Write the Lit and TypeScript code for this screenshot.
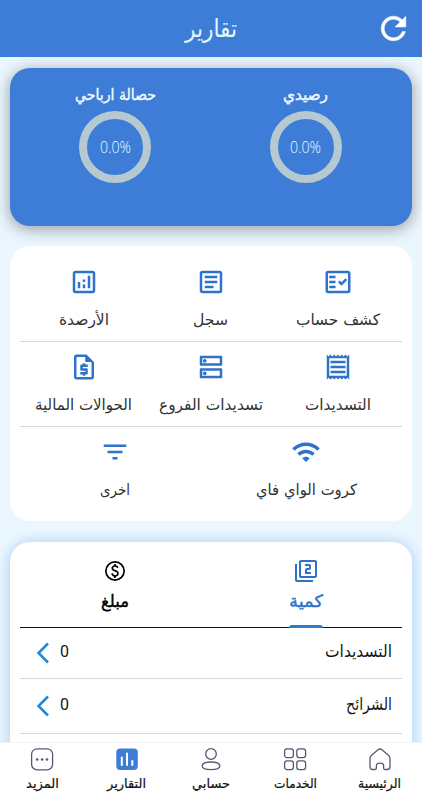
import { LitElement, html, css, svg } from "lit";
import { customElement } from "lit/decorators.js";

// A text run fitted to a given width; the baseline sits 20px under the box top.
const fit = (text: string, w: number, size: number, cls = "") => html`
  <svg class="fit ${cls}" width=${w} height="26">
    <text x=${w / 2} y="20" text-anchor="middle" font-size=${size} textLength=${w} lengthAdjust="spacingAndGlyphs">${text}</text>
  </svg>`;

const icon = (d: string, size: number) => html`
  <svg class="icon" width=${size} height=${size} viewBox="0 0 24 24"><path fill="currentColor" fill-rule="evenodd" d=${d}></path></svg>`;

const BOX = "M19 3H5c-1.1 0-2 .9-2 2v14c0 1.100.9 2 2 2h14c1.100 0 2-.9 2-2V5c0-1.100-.9-2-2-2zM19 19H5V5h14z";
const I = {
  refresh: "M17.65 6.35C16.2 4.9 14.21 4 12 4c-4.42 0-7.99 3.58-7.99 8s3.57 8 7.99 8c3.73 0 6.84-2.55 7.73-6h-2.08c-.82 2.33-3.04 4-5.65 4-3.31 0-6-2.69-6-6s2.69-6 6-6c1.66 0 3.14.69 4.22 1.78L13 11h7V4l-2.35 2.35z",
  factCheck: "M20 3H4c-1.100 0-2 .9-2 2v14c0 1.100.9 2 2 2h16c1.100 0 2-.9 2-2V5c0-1.100-.9-2-2-2zM20 19H4V5h16zM5 7h5v2H5zM5 11h5v2H5zM5 15h5v2H5zM19.41 10.42 17.99 9l-3.17 3.17-1.41-1.42L12 12.16 14.820 15z",
  article: BOX + "M7 7h10v2H7zM7 11h10v2H7zM7 15h7v2H7z",
  analytics: BOX + "M7 12h2v5H7zM15 7h2v10h-2zM11 14h2v3h-2zM11 10h2v2h-2z",
  receipt: "M19.5 3.5L18 2l-1.500 1.500L15 2l-1.500 1.500L12 2l-1.500 1.500L9 2 7.500 3.500 6 2 4.500 3.500 3 2v20l1.500-1.500L6 22l1.500-1.500L9 22l1.500-1.500L12 22l1.500-1.500L15 22l1.500-1.500L18 22l1.500-1.500L21 22V2zM19 19.090H5V4.910h14zM6 15h12v2H6zM6 11h12v2H6zM6 7h12v2H6z",
  dns: "M20 13H4c-.55 0-1 .45-1 1v6c0 .55.45 1 1 1h16c.55 0 1-.45 1-1v-6c0-.55-.45-1-1-1zM19 19H5v-4h14zM7 18.500a1.500 1.500 0 1 0 0-3 1.500 1.500 0 0 0 0 3zM20 3H4c-.55 0-1 .45-1 1v6c0 .55.45 1 1 1h16c.55 0 1-.45 1-1V4c0-.55-.45-1-1-1zM19 9H5V5h14zM7 8.500a1.500 1.500 0 1 0 0-3 1.500 1.500 0 0 0 0 3z",
  quote: "M14 2H6c-1.100 0-2 .9-2 2v16c0 1.100.9 2 2 2h12c1.100 0 2-.9 2-2V8zM6 20V4h7v4h5v12zM11 19h2v-1h1c.55 0 1-.45 1-1v-3c0-.55-.45-1-1-1h-3v-1h4v-2h-2V9h-2v1h-1c-.55 0-1 .45-1 1v3c0 .55.45 1 1 1h3v1H9v2h2z",
  wifi: "M1 9l2 2c4.970-4.970 13.030-4.970 18 0l2-2C16.930 2.930 7.080 2.930 1 9zM9 17l3 3 3-3c-1.650-1.660-4.340-1.660-6 0zM5 13l2 2c2.760-2.760 7.240-2.760 10 0l2-2C15.140 9.140 8.870 9.140 5 13z",
  filter: "M10 18h4v-2h-4zM3 6v2h18V6zM6 13h12v-2H6z",
  filter2: "M3 5H1v16c0 1.100.9 2 2 2h16v-2H3zM21 1H7c-1.100 0-2 .9-2 2v14c0 1.100.9 2 2 2h14c1.100 0 2-.9 2-2V3c0-1.100-.9-2-2-2zM21 17H7V3h14zM17 13h-4v-2h2c1.100 0 2-.89 2-2V7c0-1.110-.9-2-2-2h-4v2h4v2h-2c-1.100 0-2 .89-2 2v4h6z",
  paid: "M12 2a10 10 0 1 0 0 20 10 10 0 0 0 0-20zM12 20.300a8.300 8.300 0 1 1 0-16.600 8.300 8.300 0 0 1 0 16.600zM12.890 11.100c-1.780-.59-2.640-.96-2.640-1.900 0-1.020 1.110-1.390 1.810-1.390 1.310 0 1.790.99 1.900 1.340l1.580-.67c-.15-.44-.82-1.910-2.660-2.230V5h-1.750v1.260c-2.600.56-2.620 2.850-2.620 2.960 0 2.270 2.250 2.910 3.350 3.310 1.580.56 2.280 1.070 2.280 2.030 0 1.130-1.050 1.610-1.980 1.610-1.820 0-2.340-1.870-2.400-2.090l-1.660.67c.63 2.190 2.280 2.780 2.900 2.960V19h1.750v-1.240c.52-.09 3.020-.59 3.020-3.220.01-1.390-.6-2.610-3-3.440z",
};

const NAV = [
  { text: "الرئيسية", w: 43, art: svg`<path d="M1 10.500Q1 8.500 2.600 7.200L9 1.800Q11 .2 13 1.800L19.400 7.200Q21 8.500 21 10.500V18.500Q21 21.500 18.200 21.500H15.800Q14.600 21.500 14.600 20V17.200Q14.600 15.200 11 15.200T7.400 17.200V20Q7.400 21.500 6.200 21.500H3.800Q1 21.500 1 18.500Z"></path>` },
  { text: "الخدمات", w: 43, art: svg`<rect x=".6" y=".8" width="8.800" height="8.800" rx="2.400"></rect><rect x="12.800" y=".8" width="8.800" height="8.800" rx="2.400"></rect><rect x=".6" y="12.800" width="8.800" height="8.800" rx="2.400"></rect><rect x="12.800" y="12.800" width="8.800" height="8.800" rx="2.400"></rect>` },
  { text: "حسابي", w: 38, art: svg`<circle cx="11" cy="6" r="5.300"></circle><path d="M11 14C5.500 14 2.200 15.500 2.200 18S5.500 21.600 11 21.600 19.800 20.500 19.800 18 16.500 14 11 14Z"></path>` },
  { text: "التقارير", w: 39, art: svg`<rect x=".3" y=".5" width="21.500" height="21.500" rx="4" fill="#3d7dd8" stroke="none"></rect><path d="M5.800 9.500V17M11 5.500V17M16.300 13V17" stroke="#fff" stroke-width="2" stroke-linecap="round"></path>` },
  { text: "المزيد", w: 33, art: svg`<rect x=".6" y=".8" width="21" height="21" rx="5.500"></rect><g fill="#555a70" stroke="none"><circle cx="6.200" cy="11.500" r="1.300"></circle><circle cx="11.100" cy="11.500" r="1.300"></circle><circle cx="16" cy="11.500" r="1.300"></circle></g>` },
];

@customElement("app-root")
export class AppRoot extends LitElement {
  static styles = css`
    :host { display: flex; flex-direction: column; height: 800px; width: 422px; overflow: hidden; direction: rtl; background: #ebf7ff; font-family: "DejaVu Sans", sans-serif; color: #222; }
    svg { display: block; flex: none; }
    .fit { overflow: visible; fill: currentColor; }
    .strong { stroke: currentColor; stroke-width: .4px; }
    .latin { direction: ltr; font-family: "Open Sans", "Noto Sans", sans-serif; font-weight: 300; }
    .digit { direction: ltr; font-family: Roboto, sans-serif; }
    header { flex: none; height: 57px; box-sizing: border-box; display: grid; grid-template-columns: 58px 1fr 58px; align-items: center; justify-items: center; background: #3d7dd8; color: #fff; }
    header .icon { stroke: currentColor; stroke-width: .3px; }
    .title { color: #e4f6ff; padding-top: 3px; }
    main { flex: 1; min-height: 0; overflow: hidden; padding: 11px 10px 0; display: flex; flex-direction: column; }
    .balance { flex: none; height: 158px; border-radius: 20px; background: #3d7dd8; box-shadow: 0 3px 14px 2px rgba(70, 70, 70, .42); display: grid; grid-template-columns: 1fr 1fr; padding: 0 11px 0 10px; color: #f2fbff; }
    .gauge { display: flex; flex-direction: column; align-items: center; padding-top: 12px; }
    .ring { width: 56px; height: 56px; border: 8px solid #b7c9d0; border-radius: 50%; display: flex; justify-content: center; align-items: center; margin-top: 5px; }
    .ring .fit { margin-top: -3px; }
    .menu { flex: none; height: 275px; box-sizing: border-box; border-radius: 20px; background: #fff; margin-top: 20px; padding: 11px 10.500px 0 10px; }
    .row { display: flex; height: 85px; box-sizing: border-box; border-bottom: 1px solid #d6d8dc; }
    .row:last-child { border: none; }
    .item { flex: 1; display: flex; flex-direction: column; align-items: center; padding-top: 10px; gap: 8px; color: #333; }
    .item .icon { color: #2e73c9; }
    .stats { flex: none; height: 240px; border-radius: 20px 20px 0 0; background: #fff; margin-top: 21px; padding: 0 10.500px 0 10px; box-shadow: 0 1px 12px 3px #bcd6f6; }
    .tabs { display: flex; height: 86px; box-sizing: border-box; border-bottom: 1px solid #111; }
    .tab { flex: 1; display: flex; flex-direction: column; align-items: center; padding-top: 17px; color: #000; height: 86px; box-sizing: border-box; }
    .tab .fit { margin-top: 4px; }
    .active { color: #2e73c9; }
    .bar { width: 34px; height: 3px; border-radius: 3px 3px 0 0; background: #2e7dcb; margin-top: auto; }
    .line { height: 55px; box-sizing: border-box; border-bottom: 1px solid #d6d8dc; padding: 0 10px 0 16px; display: flex; align-items: center; color: #161616; }
    .line:nth-child(2) { height: 51px; }
    .line .fit { margin-top: -6px; }
    .gap { flex: 1; }
    .chev { margin-right: 11px; }
    nav { flex: none; height: 58px; box-sizing: border-box; background: #fff; border-top: 1px solid #f1f3f8; display: grid; grid-template-columns: repeat(5, 84.400px); }
    .nav { display: flex; flex-direction: column; align-items: center; padding-top: 5px; color: #111; }
    .art { fill: none; stroke: #555a70; stroke-width: 1.300; overflow: visible; }
    .nav .fit { margin-top: -2px; stroke-width: .2px; }
  `;

  private gauge(label: string, w: number) {
    return html`<div class="gauge">${fit(label, w, 15.5, "strong")}<div class="ring">${fit("0.0%", 31, 16, "latin")}</div></div>`;
  }

  private item(d: string, label: string, w: number) {
    return html`<div class="item">${icon(d, 30)}${fit(label, w, 15.5)}</div>`;
  }

  private line(label: string, w: number) {
    return html`<div class="line">${fit(label, w, 16.5)}<span class="gap"></span>${fit("0", 9, 17, "digit")}
      <svg class="chev" width="13" height="22"><path d="M12 1.500L2.500 11L12 20.500" fill="none" stroke="#2388d6" stroke-width="2.500"></path></svg></div>`;
  }

  render() {
    return html`
      <header>${icon(I.refresh, 37)}<div class="title">${fit("تقارير", 52, 25)}</div></header>
      <main>
        <section class="balance">${this.gauge("رصيدي", 45)}${this.gauge("حصالة ارباحي", 81)}</section>
        <section class="menu">
          <div class="row">${this.item(I.factCheck, "كشف حساب", 84)}${this.item(I.article, "سجل", 35)}${this.item(I.analytics, "الأرصدة", 50)}</div>
          <div class="row">${this.item(I.receipt, "التسديدات", 66)}${this.item(I.dns, "تسديدات الفروع", 104)}${this.item(I.quote, "الحوالات المالية", 97)}</div>
          <div class="row">${this.item(I.wifi, "كروت الواي فاي", 101)}${this.item(I.filter, "اخرى", 30)}</div>
        </section>
        <section class="stats">
          <div class="tabs">
            <div class="tab active">${icon(I.filter2, 24)}${fit("كمية", 34, 17, "strong")}<div class="bar"></div></div>
            <div class="tab">${icon(I.paid, 24)}${fit("مبلغ", 28, 17, "strong")}</div>
          </div>
          ${this.line("التسديدات", 67)}${this.line("الشرائح", 46)}
        </section>
      </main>
      <nav>${NAV.map((n) => html`<div class="nav"><svg class="art" width="22" height="22">${n.art}</svg>${fit(n.text, n.w, 13, "strong")}</div>`)}</nav>
    `;
  }
}
